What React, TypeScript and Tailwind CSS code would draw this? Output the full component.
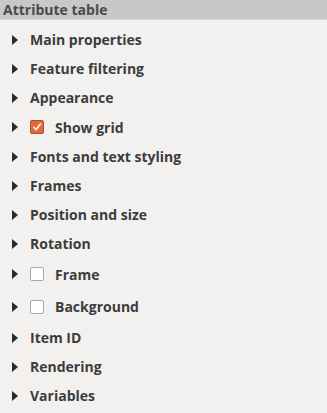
import { useState } from "react"

type Tgroup = {
  label: string
  check?: boolean
  h: string
}

const groups: Tgroup[] = [
  { label: "Main properties", h: "h-[29px]" },
  { label: "Feature filtering", h: "h-[29px]" },
  { label: "Appearance", h: "h-[29px]" },
  { label: "Show grid", check: true, h: "h-[30px]" },
  { label: "Fonts and text styling", h: "h-[29px]" },
  { label: "Frames", h: "h-[29px]" },
  { label: "Position and size", h: "h-[29px]" },
  { label: "Rotation", h: "h-[29px]" },
  { label: "Frame", check: true, h: "h-[32px]" },
  { label: "Background", check: true, h: "h-[33px]" },
  { label: "Item ID", h: "h-[29px]" },
  { label: "Rendering", h: "h-[29px]" },
  { label: "Variables", h: "h-[29px]" },
]

function Arrow() {
  return (
    <svg width="6" height="10" viewBox="0 0 6 10" className="shrink-0">
      <path d="M0 0 L6 5 L0 10 Z" fill="#2a2a2a" />
    </svg>
  )
}

function Box({ on, toggle }: { on: boolean; toggle: () => void }) {
  return (
    <button
      onClick={toggle}
      className={
        on
          ? "w-[14px] h-[14px] rounded-[2px] border border-[#b24f24] bg-[#e8683a] flex items-center justify-center shrink-0"
          : "w-[14px] h-[14px] rounded-[2px] border border-[#a8a8a4] bg-white shrink-0"
      }
    >
      {on && (
        <svg width="10" height="10" viewBox="0 0 10 10">
          <path d="M1.5 5 L4 7.5 L8.8 1.6" stroke="#fff" strokeWidth="1.6" fill="none" />
        </svg>
      )}
    </button>
  )
}

export default function App() {
  const [checks, setChecks] = useState<Record<string, boolean>>({ "Show grid": true })

  return (
    <div
      className="w-[327px] h-[413px] bg-[#f2f1f0] text-[#3c3c3c] overflow-hidden"
      style={{ fontFamily: '"Open Sans", "DejaVu Sans", sans-serif' }}
    >
      {/* title bar */}
      <div className="h-[20px] bg-[#c8c8c8] border-b border-[#d6d6d2] pl-[3px] flex items-center text-[14px] leading-none font-bold text-[#4a4a4a]">
        Attribute table
      </div>

      <div className="pt-[5px] flex flex-col">
        {groups.map((g) => (
          <div key={g.label} className={g.h + " flex items-center pl-[12px] gap-[12px]"}>
            <Arrow />
            {g.check && (
              <Box
                on={!!checks[g.label]}
                toggle={() => setChecks({ ...checks, [g.label]: !checks[g.label] })}
              />
            )}
            <span className={g.check ? "text-[14px] font-bold ml-[-1px]" : "text-[14px] font-bold"}>
              {g.label}
            </span>
          </div>
        ))}
      </div>
    </div>
  )
}
